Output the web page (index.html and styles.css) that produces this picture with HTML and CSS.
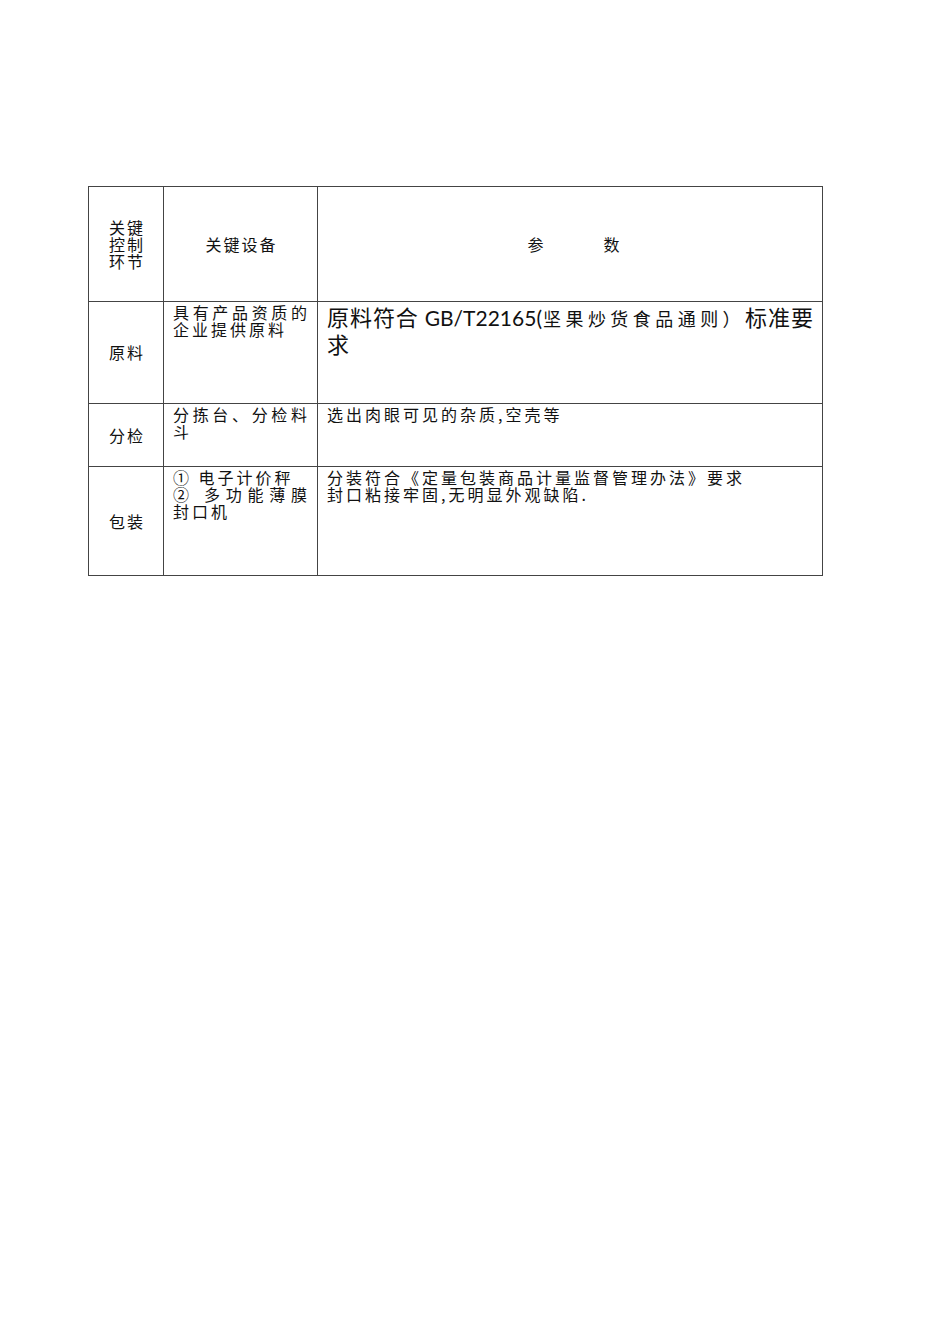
FILE: index.html
```html
<!DOCTYPE html>
<html lang="zh-CN">
<head>
<meta charset="utf-8">
<title>关键控制环节</title>
<link rel="stylesheet" href="styles.css">
</head>
<body>
<div class="page">
  <table class="ccp">
    <colgroup>
      <col class="c1">
      <col class="c2">
      <col class="c3">
    </colgroup>
    <tr class="r1">
      <td class="mid"><div class="narrow">关键控制环节</div></td>
      <td class="mid center">关键设备</td>
      <td class="mid center param">参<span class="sp"></span>数</td>
    </tr>
    <tr class="r2">
      <td class="mid center">原料</td>
      <td class="top just">具有产品资质的企业提供原料</td>
      <td class="top big">
        <div class="jline">原料符合 <span class="latin">GB/T22165(</span><span class="small">坚果炒货食品通则）</span>标准要</div>
        <div>求</div>
      </td>
    </tr>
    <tr class="r3">
      <td class="mid center">分检</td>
      <td class="top just">分拣台、分检料斗</td>
      <td class="top">选出肉眼可见的杂质,空壳等</td>
    </tr>
    <tr class="r4">
      <td class="mid center">包装</td>
      <td class="top">
        <div>① 电子计价秤</div>
        <div class="jline">② 多功能薄膜</div>
        <div>封口机</div>
      </td>
      <td class="top">
        <div>分装符合《定量包装商品计量监督管理办法》要求</div>
        <div>封口粘接牢固,无明显外观缺陷.</div>
      </td>
    </tr>
  </table>
</div>
</body>
</html>
```

FILE: styles.css
```css
html, body {
  margin: 0;
  padding: 0;
  background: #ffffff;
}

body {
  font-family: "Noto Sans CJK SC", "Noto Sans", sans-serif;
  color: #111;
  font-size: 16px;
}

.page {
  padding: 186px 0 0 88px;
}

.ccp {
  border-collapse: collapse;
  table-layout: fixed;
  width: 734px;
}

.c1 { width: 75px; }
.c2 { width: 154px; }
.c3 { width: 505px; }

.ccp td {
  border: 1px solid #444;
  padding: 0 7px 0 9px;
  font-size: 16px;
  line-height: 17px;
  letter-spacing: 3px;
  box-sizing: border-box;
}

.r1 { height: 115px; }
.r2 { height: 102px; }
.r3 { height: 63px; }
.r4 { height: 109px; }

.ccp td.mid {
  vertical-align: middle;
  letter-spacing: 2px;
}

.ccp td.param {
  padding-left: 16px;
}

.sp {
  display: inline-block;
  width: 58px;
}

.ccp td.top {
  vertical-align: top;
  padding-top: 2px;
}

.center {
  text-align: center;
}

.narrow {
  width: 38px;
  margin: 0 auto;
  text-align: left;
  padding-left: 2px;
}

.just {
  text-align: justify;
}

.jline {
  text-align: justify;
  text-align-last: justify;
}

.ccp td.big {
  font-size: 22px;
  line-height: 25px;
  letter-spacing: 0;
  padding-top: 2px;
  padding-right: 9px;
}

.latin {
  font-family: Lato, "Noto Sans", sans-serif;
  font-size: 21px;
}

.small {
  font-size: 18px;
  letter-spacing: 3.5px;
}
```
